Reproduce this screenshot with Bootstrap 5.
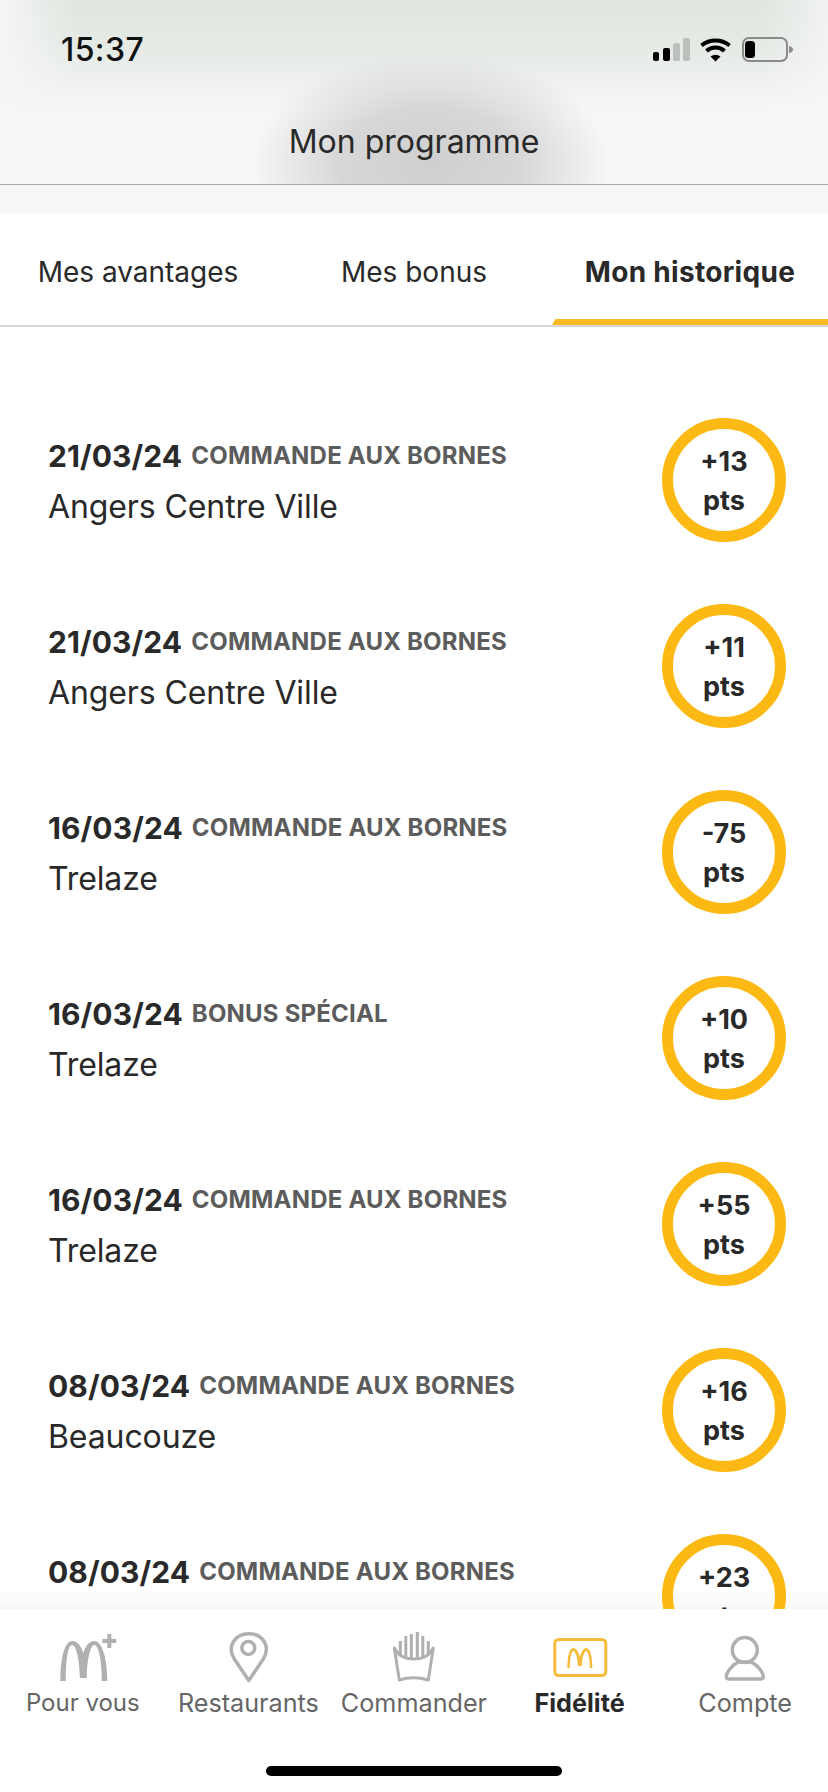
<!DOCTYPE html>
<html lang="fr">
<head>
    <meta charset="UTF-8">
    <title>Mon programme</title>
    <link href="https://cdn.jsdelivr.net/npm/bootstrap@5.3.0/dist/css/bootstrap.min.css" rel="stylesheet">
    <style>
        body { background: #fff; font-family: Inter, "Liberation Sans", sans-serif; color: #292929; }
        .ecran { width: 828px; height: 1792px; overflow: hidden; }
        .entete {
            height: 185px;
            border-bottom: 1px solid #a9a9a9;
            background:
                radial-gradient(ellipse 180px 115px at 430px 165px, #cfcfcf 0%, rgba(207,207,207,.8) 50%, rgba(207,207,207,0) 100%),
                linear-gradient(90deg, #f5f6f5 0, rgba(247,247,247,0) 75px, rgba(247,247,247,0) 760px, rgba(247,247,247,.7) 100%),
                linear-gradient(180deg, #dfe6e0 0%, #e5eae5 25%, #f7f7f7 62%);
        }
        .barre-etat { height: 100px; padding: 30px 34px 0 61px; }
        .heure { font-size: 32px; font-weight: 500; line-height: 40px; letter-spacing: .4px; color: #111; }
        .barre-etat svg { margin-top: 7px; }
        .titre { font-size: 32px; line-height: 40px; font-weight: 400; padding-top: 22px; }
        .bande { height: 29px; background: #f7f7f7; }
        .onglets { height: 113px; border-bottom: 2px solid #d6d6d6; }
        .onglet { font-size: 28px; line-height: 50px; padding-top: 33px; }
        .onglet.actif { font-weight: 700; letter-spacing: .3px; }
        .onglet.actif::after {
            content: ""; position: absolute; left: 0; right: -6px; bottom: 0; height: 6px;
            background: #f9b922; transform: skewX(-30deg); transform-origin: bottom;
        }
        .liste {
            padding-top: 60px; overflow: hidden; min-height: 0;
            background: linear-gradient(180deg, rgba(247,247,247,0), #f7f7f7) bottom / 100% 20px no-repeat;
        }
        .ligne { height: 186px; padding: 0 42px 0 48px; }
        .texte-ligne { padding-top: 2px; }
        .date-ligne { font-size: 30px; font-weight: 700; line-height: 40px; letter-spacing: .1px; }
        .type-ligne { font-size: 24px; font-weight: 700; color: #5c5c5c; line-height: 40px; letter-spacing: .2px; margin-left: 9px; }
        .lieu { font-size: 32px; line-height: 40px; margin-top: 11px; letter-spacing: -.1px; }
        .anneau {
            width: 124px; height: 124px; border: 11px solid #fdb913; border-radius: 50%; padding-top: 2px;
            font-size: 27px; font-weight: 700; line-height: 39px;
        }
        .pied { height: 183px; background: #fff; position: relative; }
        .rubrique { width: 20%; color: #666; font-size: 25.2px; line-height: 30px; padding-top: 22px; }
        .rubrique svg { display: block; height: 56px; margin-bottom: 1px; }
        .rubrique.courte { font-size: 24px; }
        .rubrique.actif { color: #292929; font-weight: 700; }
        .barre-accueil { position: absolute; left: 266px; top: 157px; width: 296px; height: 10px; border-radius: 5px; background: #000; }
    </style>
</head>
<body>
    <div class="ecran d-flex flex-column">
        <header class="entete flex-shrink-0">
            <div class="barre-etat d-flex justify-content-between align-items-start">
                <span class="heure">15:37</span>
                <svg width="141" height="26" viewBox="0 0 141 26">
                    <rect x="0" y="15" width="6" height="9" rx="2" fill="#000"/>
                    <rect x="10" y="11" width="7" height="13" rx="2" fill="#000"/>
                    <rect x="20" y="6" width="7" height="18" rx="2" fill="#bcbfbc"/>
                    <rect x="30" y="1" width="7" height="23" rx="2" fill="#bcbfbc"/>
                    <path d="M48.500 8.500a22 22 0 0 1 28 0" fill="none" stroke="#000" stroke-width="4"/>
                    <path d="M53.500 14a13 13 0 0 1 18 0" fill="none" stroke="#000" stroke-width="4"/>
                    <path d="M57.500 19.500q5-3.500 10 0l-5 5z" fill="#000"/>
                    <rect x="90" y="1" width="44" height="23" rx="6" fill="none" stroke="#8a8a8a" stroke-width="2"/>
                    <rect x="92" y="4" width="10" height="17" rx="3.500" fill="#000"/>
                    <path d="M136 9c2.500.5 4 2 4 3.500s-1.500 3-4 3.500z" fill="#8a8a8a"/>
                </svg>
            </div>
            <div class="titre text-center">Mon programme</div>
        </header>
        <div class="bande flex-shrink-0"></div>

        <nav class="onglets d-flex flex-shrink-0">
            <div class="onglet flex-fill text-center" style="width:33.33%">Mes avantages</div>
            <div class="onglet flex-fill text-center" style="width:33.33%">Mes bonus</div>
            <div class="onglet actif flex-fill text-center position-relative" style="width:33.33%">Mon historique</div>
        </nav>

        <main class="liste flex-grow-1" id="liste"></main>

        <footer class="pied d-flex flex-shrink-0">
            <div class="rubrique courte text-center">
                <svg width="100%" viewBox="0 0 165 56">
                    <path d="M60 50C60 28 64 10 72 10C77 10 81 15 83 22C85 15 89 10 94 10C102 10 107 28 107 50H101.500C101.500 30 98.500 14 94 14C90 14 86.500 30 86.500 47H79.500C79.500 30 76 14 72 14C67.500 14 65.500 30 65.500 50Z" fill="#b0b0b0"/>
                    <path d="M102 10h14M109 3v14" stroke="#b0b0b0" stroke-width="4"/>
                </svg>
                Pour vous
            </div>
            <div class="rubrique text-center">
                <svg width="100%" viewBox="0 0 165 56">
                    <path d="M82.500 49.500L68 28C60 15 69 2.800 82.500 2.800S105 15 97 28Z" fill="none" stroke="#b0b0b0" stroke-width="3.500" stroke-linejoin="round"/>
                    <circle cx="82" cy="17" r="6.500" fill="none" stroke="#b0b0b0" stroke-width="3.500"/>
                </svg>
                Restaurants
            </div>
            <div class="rubrique text-center">
                <svg width="100%" viewBox="0 0 165 56">
                    <path d="M63 17l2 3c3 5 9 8 17.500 8s14.500-3 17.500-8l2-3-5 32c-10-3-20-3-29 0z" fill="#fff" stroke="#b0b0b0" stroke-width="3" stroke-linejoin="round"/>
                    <path d="M69 24V10M74.500 26V5M80 27V3M86 27V1M91.500 26V5M97 24V10" fill="none" stroke="#b0b0b0" stroke-width="3"/>
                </svg>
                Commander
            </div>
            <div class="rubrique actif text-center">
                <svg width="100%" viewBox="0 0 165 56">
                    <rect x="57.500" y="8.500" width="51" height="36" rx="4" fill="none" stroke="#f5bb3a" stroke-width="3"/>
                    <path d="M70 37C70 26 72 17 76 17C79 17 81 21 82.500 26C84 21 86 17 89 17C93 17 95 26 95 37H92.500C92.500 28 91 20 89 20C87 20 84.500 27 84.500 35H80.500C80.500 27 78 20 76 20C74 20 72.500 28 72.500 37Z" fill="#f5bb3a"/>
                </svg>
                Fidélité
            </div>
            <div class="rubrique text-center">
                <svg width="100%" viewBox="0 0 165 56">
                    <circle cx="82.500" cy="19" r="12.500" fill="none" stroke="#b0b0b0" stroke-width="3.500"/>
                    <path d="M64 46c0-5 6-12 12-15h13c6 3 12 10 12 15 0 1-1 2-2 2H66c-1 0-2-1-2-2z" fill="none" stroke="#b0b0b0" stroke-width="3.500" stroke-linejoin="round"/>
                </svg>
                Compte
            </div>
            <div class="barre-accueil"></div>
        </footer>
    </div>

    <script>
        const lignes = [
            ['21/03/24', 'COMMANDE AUX BORNES', 'Angers Centre Ville', '+13'],
            ['21/03/24', 'COMMANDE AUX BORNES', 'Angers Centre Ville', '+11'],
            ['16/03/24', 'COMMANDE AUX BORNES', 'Trelaze', '-75'],
            ['16/03/24', 'BONUS SPÉCIAL', 'Trelaze', '+10'],
            ['16/03/24', 'COMMANDE AUX BORNES', 'Trelaze', '+55'],
            ['08/03/24', 'COMMANDE AUX BORNES', 'Beaucouze', '+16'],
            ['08/03/24', 'COMMANDE AUX BORNES', 'Beaucouze', '+23']
        ];
        document.getElementById('liste').innerHTML = lignes.map(l => `
            <div class="ligne d-flex justify-content-between align-items-center">
                <div class="texte-ligne">
                    <div class="d-flex"><span class="date-ligne">${l[0]}</span><span class="type-ligne">${l[1]}</span></div>
                    <div class="lieu">${l[2]}</div>
                </div>
                <div class="anneau d-flex flex-column align-items-center justify-content-center flex-shrink-0"><span>${l[3]}</span><span>pts</span></div>
            </div>`).join('');
    </script>
    <script src="https://cdn.jsdelivr.net/npm/bootstrap@5.3.0/dist/js/bootstrap.bundle.min.js"></script>
</body>
</html>
